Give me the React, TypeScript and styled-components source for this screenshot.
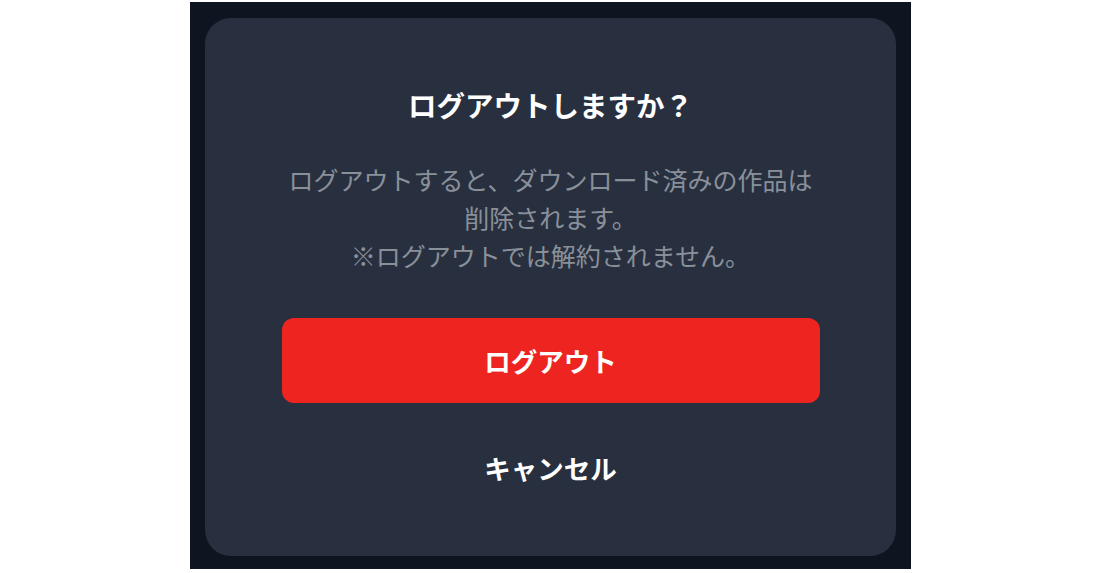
import React from 'react';
import styled, { createGlobalStyle } from 'styled-components';

const GlobalStyle = createGlobalStyle`
  html, body {
    margin: 0;
    padding: 0;
    background: #ffffff;
  }
  body {
    font-family: "Noto Sans CJK JP", "Noto Sans", sans-serif;
  }
`;

const Page = styled.div`
  width: 1100px;
  height: 573px;
  display: flex;
  justify-content: center;
  padding-top: 2px;
  box-sizing: border-box;
`;

const Backdrop = styled.div`
  width: 721px;
  height: 567px;
  background: #0e1420;
  padding: 16px 15px 13px 15px;
  box-sizing: border-box;
  display: flex;
`;

const Dialog = styled.div`
  flex: 1;
  background: #283040;
  border-radius: 26px;
  padding: 67px 76px 0 77px;
  box-sizing: border-box;
  display: flex;
  flex-direction: column;
  align-items: stretch;
`;

const Title = styled.h2`
  margin: 0;
  font-size: 28.5px;
  line-height: 40px;
  font-weight: 700;
  color: #ffffff;
  text-align: center;
`;

const Message = styled.p`
  margin: 35px 0 0;
  font-size: 25px;
  line-height: 38px;
  font-weight: 400;
  color: #8a909a;
  text-align: center;
`;

const ActionButton = styled.button<{ $primary?: boolean }>`
  height: 85px;
  border: none;
  border-radius: 12px;
  background: ${p => (p.$primary ? '#ee2420' : 'transparent')};
  color: #ffffff;
  font-family: inherit;
  font-size: 26.5px;
  font-weight: 700;
  cursor: pointer;
  margin-top: ${p => (p.$primary ? '44px' : '22px')};
`;

export default function App() {
  return (
    <>
      <GlobalStyle />
      <Page>
        <Backdrop>
          <Dialog>
            <Title>ログアウトしますか？</Title>
            <Message>
              ログアウトすると、ダウンロード済みの作品は
              <br />
              削除されます。
              <br />
              ※ログアウトでは解約されません。
            </Message>
            <ActionButton $primary>ログアウト</ActionButton>
            <ActionButton>キャンセル</ActionButton>
          </Dialog>
        </Backdrop>
      </Page>
    </>
  );
}
